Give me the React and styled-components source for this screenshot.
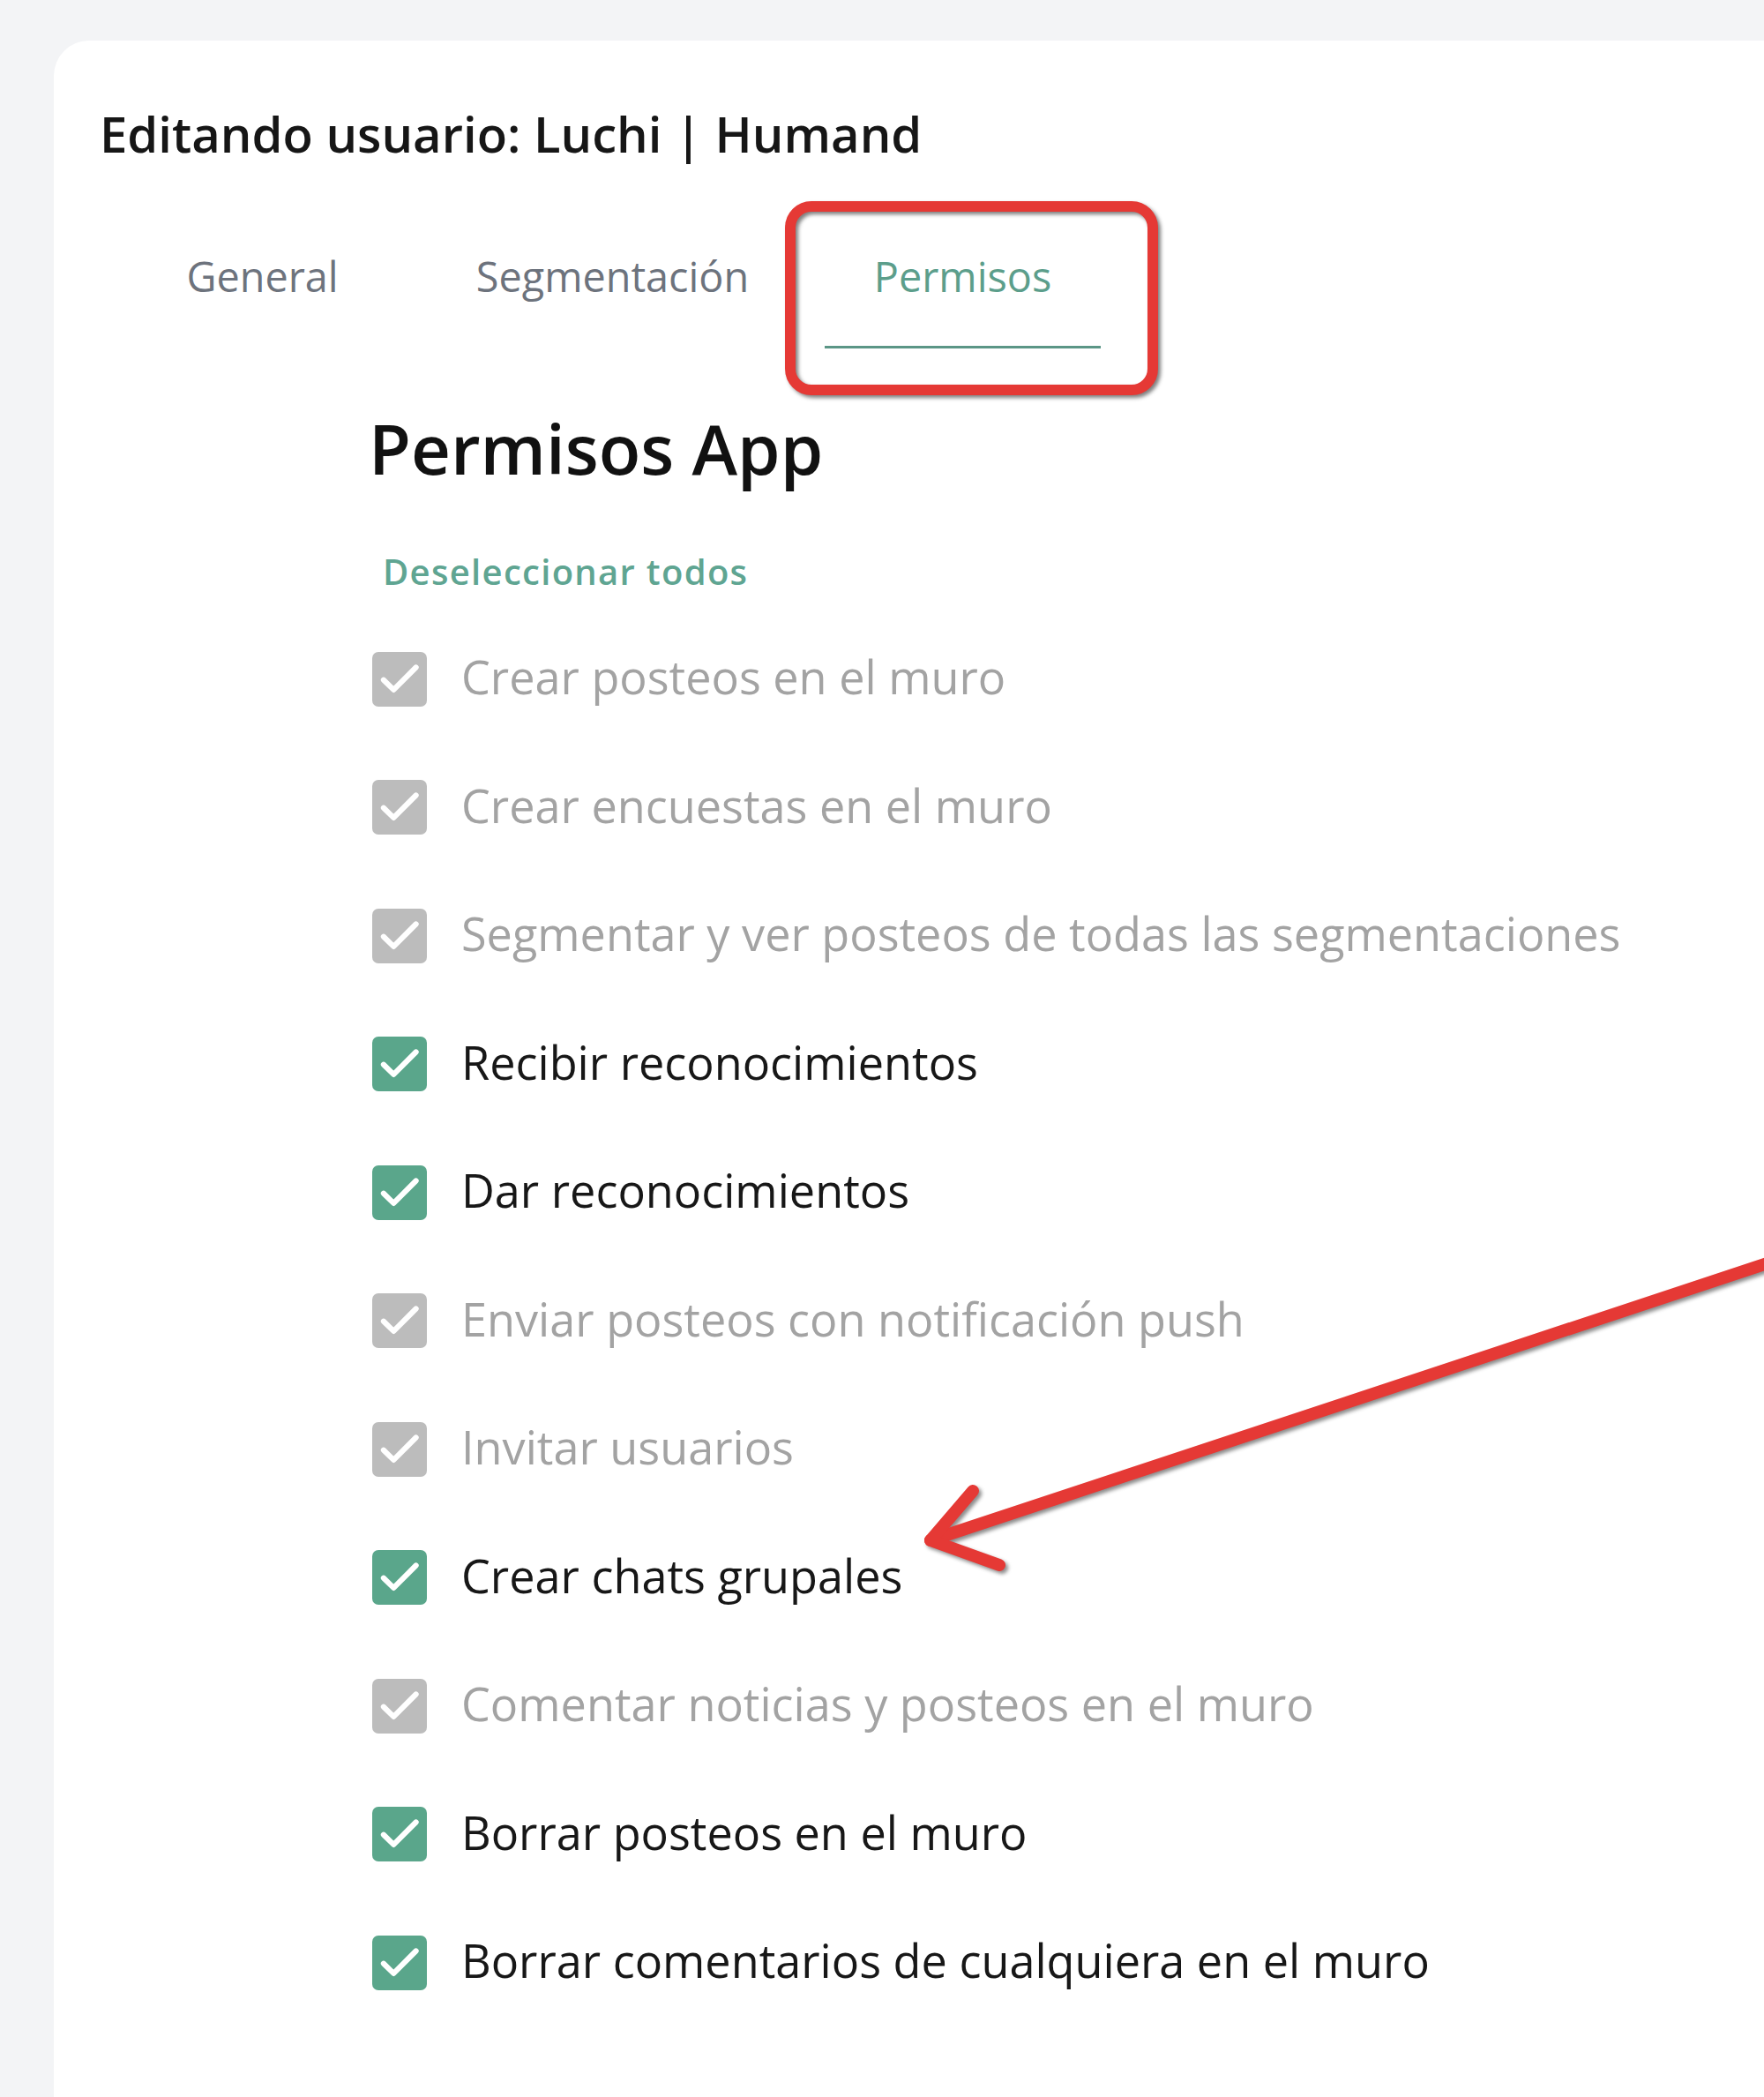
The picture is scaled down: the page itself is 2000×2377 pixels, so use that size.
import styled, { createGlobalStyle } from "styled-components";

const Global = createGlobalStyle`
    html, body {
        margin: 0;
        padding: 0;
        background: #f3f4f6;
    }
    body {
        font-family: "Open Sans", "Noto Sans", sans-serif;
        overflow: hidden;
    }
`;

const Page = styled.div`
    position: relative;
    min-height: 2377px;
    padding: 46px 0 0 61px;
    box-sizing: border-box;
    overflow: hidden;
`;

const Card = styled.div`
    background: #fff;
    border-radius: 40px 0 0 0;
    min-height: calc(2377px - 46px);
    padding: 65px 0 0 52px;
    box-sizing: border-box;
`;

const Title = styled.h1`
    margin: 0;
    font-size: 56.2px;
    line-height: 80px;
    font-weight: 600;
    color: #161616;
`;

const Tabs = styled.div`
    display: flex;
    gap: 84px;
    margin: 40px 0 0 28px;
`;

const Tab = styled.div`
    position: relative;
    width: 313px;
    padding: 54px 0 51px;
    text-align: center;
    font-size: 46.8px;
    line-height: 56px;
    font-weight: 500;
    color: ${p => (p.$active ? "#5c9e8b" : "#6d737d")};
    border-bottom: 3px solid ${p => (p.$active ? "#5b9686" : "transparent")};
`;

/* red annotation box drawn over the active tab */
const Highlight = styled.span`
    position: absolute;
    top: -3px;
    bottom: -56px;
    left: -45px;
    right: -65px;
    border: 12px solid #e53935;
    border-radius: 30px;
    filter: drop-shadow(3px 3px 2px rgba(0, 0, 0, 0.5));
    pointer-events: none;
`;

const Section = styled.div`
    margin: 63px 0 0 309px;
`;

const Heading = styled.h2`
    margin: 0 0 0 -4px;
    font-size: 78px;
    line-height: 100px;
    font-weight: 600;
    color: #111;
`;

const TextButton = styled.button`
    display: block;
    margin-top: 54px;
    padding: 8px 12px;
    border: 0;
    background: transparent;
    font-family: inherit;
    font-size: 40px;
    line-height: 56px;
    font-weight: 600;
    letter-spacing: 1.3px;
    color: #5fa592;
    cursor: pointer;
`;

const List = styled.div`
    margin-top: 13px;
`;

const Row = styled.label`
    display: flex;
    align-items: center;
    gap: 39px;
    height: 145.5px;
    font-size: 52.2px;
    color: ${p => (p.$disabled ? "#a3a3a3" : "#171717")};
`;

const Label = styled.span`
    position: relative;
    top: -3px;
`;

const Box = styled.span`
    flex: none;
    width: 62px;
    height: 62px;
    border-radius: 7px;
    background: ${p => (p.$disabled ? "#bcbcbc" : "#5aa68b")};
    display: flex;
    align-items: center;
    justify-content: center;
    svg {
        width: 62px;
        height: 62px;
    }
`;

const Arrow = styled.svg`
    position: absolute;
    left: 1000px;
    top: 1380px;
    width: 1000px;
    height: 420px;
    overflow: visible;
    filter: drop-shadow(3px 3px 2px rgba(0, 0, 0, 0.45));
    pointer-events: none;
`;

const permisos = [
    { label: "Crear posteos en el muro", disabled: true },
    { label: "Crear encuestas en el muro", disabled: true },
    { label: "Segmentar y ver posteos de todas las segmentaciones", disabled: true },
    { label: "Recibir reconocimientos" },
    { label: "Dar reconocimientos" },
    { label: "Enviar posteos con notificación push", disabled: true },
    { label: "Invitar usuarios", disabled: true },
    { label: "Crear chats grupales" },
    { label: "Comentar noticias y posteos en el muro", disabled: true },
    { label: "Borrar posteos en el muro" },
    { label: "Borrar comentarios de cualquiera en el muro" },
];

function Check({ disabled }) {
    return <Box $disabled={disabled}>
        <svg viewBox="0 0 24 24">
            <polyline points="5,12.3 9.4,16.6 19.2,6.8" fill="none" stroke="#fff" strokeWidth="2.4" strokeLinecap="round" strokeLinejoin="round" />
        </svg>
    </Box>
}

export default function App() {
    return <>
        <Global />
        <Page>
            <Card>
                <Title>Editando usuario: Luchi | Humand</Title>
                <Tabs>
                    <Tab>General</Tab>
                    <Tab>Segmentación</Tab>
                    <Tab $active>
                        Permisos
                        <Highlight />
                    </Tab>
                </Tabs>
                <Section>
                    <Heading>Permisos App</Heading>
                    <TextButton>Deseleccionar todos</TextButton>
                    <List>
                        {permisos.map(p =>
                            <Row key={p.label} $disabled={p.disabled}>
                                <Check disabled={p.disabled} />
                                <Label>{p.label}</Label>
                            </Row>
                        )}
                    </List>
                </Section>
            </Card>
            <Arrow viewBox="0 0 1000 420">
                <g fill="none" stroke="#e53935" strokeWidth="14" strokeLinecap="round" strokeLinejoin="round">
                    <line x1="1040" y1="40" x2="55" y2="366" />
                    <polyline points="103,310 55,366 133,394" />
                </g>
            </Arrow>
        </Page>
    </>
}
